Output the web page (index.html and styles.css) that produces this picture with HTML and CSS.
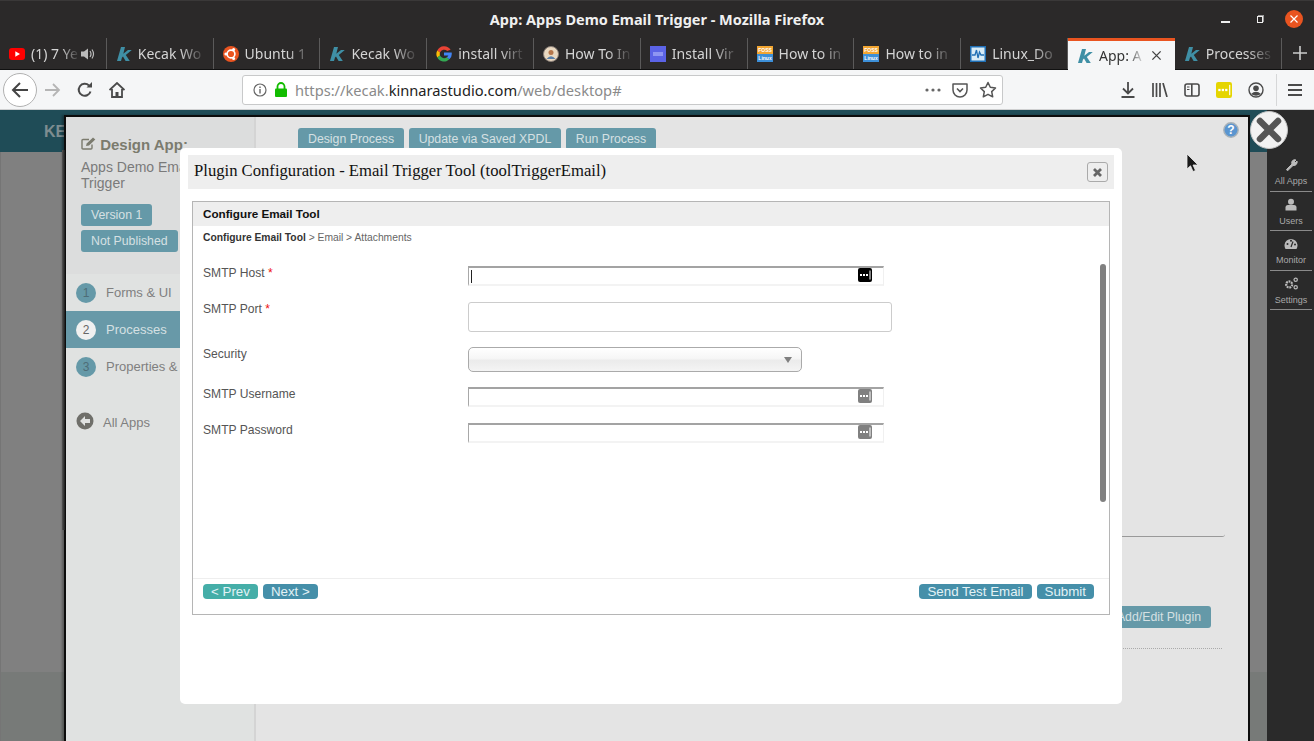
FILE: index.html
```html
<!DOCTYPE html>
<html lang="en">
<head>
    <meta charset="UTF-8">
    <meta name="viewport" content="width=device-width, initial-scale=1.0">
    <title>App: Apps Demo Email Trigger - Mozilla Firefox</title>
    <link rel="stylesheet" href="styles.css">
</head>
<body>
    <svg class="defs" width="0" height="0">
        <symbol id="k-logo" viewBox="0 0 16 16">
            <path d="M5 1H9L7.300 7.800 12 4H15.800L9.800 9 13.800 15H9.600L7 10.600 6 11.500 5 15H1z" fill="#3f8fa5"/>
        </symbol>
        <symbol id="pw-dots" viewBox="0 0 14 14">
            <rect width="14" height="14" rx="2" fill="currentColor"/>
            <rect x="2" y="6" width="2" height="2" fill="#fff"/>
            <rect x="5" y="6" width="2" height="2" fill="#fff"/>
            <rect x="8" y="6" width="2" height="2" fill="#fff"/>
            <rect x="11.500" y="2.500" width="1" height="9" fill="#fff"/>
        </symbol>
    </svg>

    <header class="titlebar">
        <span class="window-title">App: Apps Demo Email Trigger - Mozilla Firefox</span>
        <div class="window-controls">
            <span class="win-min"></span>
            <span class="win-max"></span>
            <span class="win-close">
                <svg width="10" height="10" viewBox="0 0 10 10"><path d="M1.500 1.500 8.500 8.500M8.500 1.500 1.500 8.500" stroke="#fff" stroke-width="1.200"/></svg>
            </span>
        </div>
    </header>

    <nav class="tabstrip">
        <div class="tab">
            <svg class="tab-icon" viewBox="0 0 16 16"><rect y="2" width="16" height="12" rx="3" fill="#f00"/><path d="M6.300 5.200 11 8 6.300 10.800z" fill="#fff"/></svg>
            <span class="tab-label tab-label-short">(1) 7 Ye</span>
            <svg class="tab-sound" viewBox="0 0 14 14"><path d="M0 4.500H3L7 1.500V12.500L3 9.500H0z" fill="#bbb"/><path d="M9 4Q11 7 9 10M11 2.500Q14 7 11 11.500" fill="none" stroke="#bbb" stroke-width="1.200"/></svg>
        </div>
        <div class="tab">
            <svg class="tab-icon"><use href="#k-logo"/></svg>
            <span class="tab-label">Kecak Wo</span>
        </div>
        <div class="tab">
            <svg class="tab-icon" viewBox="0 0 16 16"><circle cx="8" cy="8" r="8" fill="#e95420"/><circle cx="8" cy="8" r="3.900" fill="none" stroke="#fff" stroke-width="1.600"/><circle cx="2.900" cy="8" r="1.500" fill="#fff"/><circle cx="10.600" cy="3.500" r="1.500" fill="#fff"/><circle cx="10.600" cy="12.500" r="1.500" fill="#fff"/></svg>
            <span class="tab-label">Ubuntu 1</span>
        </div>
        <div class="tab">
            <svg class="tab-icon"><use href="#k-logo"/></svg>
            <span class="tab-label">Kecak Wo</span>
        </div>
        <div class="tab">
            <svg class="tab-icon" viewBox="0 0 16 16">
                <path d="M14.600 3.800A7.600 7.600 0 0 0 1.300 4.400L4 6.500A4.500 4.500 0 0 1 11.200 4.900z" fill="#ea4335"/>
                <path d="M1.300 4.400A7.600 7.600 0 0 0 1.300 11.600L4 9.500A4.500 4.500 0 0 1 4 6.500z" fill="#fbbc05"/>
                <path d="M1.300 11.600A7.600 7.600 0 0 0 13.400 13.300L10.800 11.300A4.500 4.500 0 0 1 4 9.500z" fill="#34a853"/>
                <path d="M13.400 13.300A7.600 7.600 0 0 0 15.700 6.600H8V9.600H12.400A4 4 0 0 1 10.800 11.300z" fill="#4285f4"/>
            </svg>
            <span class="tab-label">install virt</span>
        </div>
        <div class="tab">
            <svg class="tab-icon" viewBox="0 0 16 16"><circle cx="8" cy="8" r="7.500" fill="#e9d8c0" stroke="#8a7f78"/><circle cx="8" cy="6.500" r="2.500" fill="#b5764a"/><path d="M3.500 13Q8 7.500 12.500 13" fill="#5a7fa8"/></svg>
            <span class="tab-label">How To In</span>
        </div>
        <div class="tab">
            <svg class="tab-icon" viewBox="0 0 16 16"><rect width="16" height="16" fill="#5b63e6"/><rect x="3" y="6" width="10" height="4" fill="#8f96f2"/></svg>
            <span class="tab-label">Install Vir</span>
        </div>
        <div class="tab">
            <svg class="tab-icon" viewBox="0 0 16 16">
                <rect width="16" height="8" fill="#f2a531"/><rect y="8" width="16" height="8" fill="#3d8fd8"/>
                <text x="8" y="6" text-anchor="middle" class="foss-mark">FOSS</text>
                <text x="8" y="14" text-anchor="middle" class="foss-mark">Linux</text>
            </svg>
            <span class="tab-label">How to in</span>
        </div>
        <div class="tab">
            <svg class="tab-icon" viewBox="0 0 16 16">
                <rect width="16" height="8" fill="#f2a531"/><rect y="8" width="16" height="8" fill="#3d8fd8"/>
                <text x="8" y="6" text-anchor="middle" class="foss-mark">FOSS</text>
                <text x="8" y="14" text-anchor="middle" class="foss-mark">Linux</text>
            </svg>
            <span class="tab-label">How to in</span>
        </div>
        <div class="tab">
            <svg class="tab-icon" viewBox="0 0 16 16"><rect width="16" height="16" fill="#1f6fb5"/><rect x="1.500" y="1.500" width="13" height="13" fill="#d8ecf7"/><path d="M2 9H5L6.500 4 8 12 9.500 6 11 9H14" fill="none" stroke="#1f6fb5" stroke-width="1.300"/></svg>
            <span class="tab-label">Linux_Do</span>
        </div>
        <div class="tab tab-active">
            <svg class="tab-icon"><use href="#k-logo"/></svg>
            <span class="tab-label tab-label-active">App: A</span>
            <svg class="tab-x" viewBox="0 0 12 12"><path d="M1.500 1.500 10.500 10.500M10.500 1.500 1.500 10.500" stroke="#444" stroke-width="1.500"/></svg>
        </div>
        <div class="tab">
            <svg class="tab-icon"><use href="#k-logo"/></svg>
            <span class="tab-label">Processes</span>
        </div>
        <svg class="tab-new" viewBox="0 0 14 14"><path d="M7 0V14M0 7H14" stroke="#ccc" stroke-width="1.600"/></svg>
    </nav>

    <nav class="navbar">
        <span class="nav-back">
            <svg width="18" height="18" viewBox="0 0 18 18"><path d="M17 9H2M9 2 2 9 9 16" fill="none" stroke="#444" stroke-width="2"/></svg>
        </span>
        <span class="nav-btn">
            <svg width="16" height="16" viewBox="0 0 16 16"><path d="M0 8H14M8 2 14 8 8 14" fill="none" stroke="#b5b5b5" stroke-width="1.800"/></svg>
        </span>
        <span class="nav-btn">
            <svg width="16" height="16" viewBox="0 0 16 16"><path d="M13.500 9.500A6 6 0 1 1 12 3.500" fill="none" stroke="#4a4a4a" stroke-width="2"/><path d="M9.500 5.500H15V0z" fill="#4a4a4a"/></svg>
        </span>
        <span class="nav-btn">
            <svg width="16" height="16" viewBox="0 0 16 16"><path d="M.5 8 8 1 15.500 8M3 7V15H13V7" fill="none" stroke="#4a4a4a" stroke-width="1.800"/><rect x="6.500" y="10" width="3" height="5" fill="#4a4a4a"/></svg>
        </span>

        <div class="urlbar">
            <svg class="url-info" width="14" height="14" viewBox="0 0 14 14"><circle cx="7" cy="7" r="6" fill="none" stroke="#666" stroke-width="1.200"/><rect x="6.300" y="6" width="1.400" height="4.500" fill="#666"/><rect x="6.300" y="3.500" width="1.400" height="1.500" fill="#666"/></svg>
            <svg class="url-lock" width="12" height="15" viewBox="0 0 12 15"><path d="M2.500 7V4.500A3.500 3.500 0 0 1 9.500 4.500V7" fill="none" stroke="#12bc00" stroke-width="1.800"/><rect y="6.500" width="12" height="8.500" rx="1" fill="#12bc00"/></svg>
            <span class="url-text">https://kecak.<b>kinnarastudio.com</b>/web/desktop#</span>
            <span class="url-actions">
                <svg width="16" height="4" viewBox="0 0 16 4"><circle cx="2" cy="2" r="1.600" fill="#666"/><circle cx="8" cy="2" r="1.600" fill="#666"/><circle cx="14" cy="2" r="1.600" fill="#666"/></svg>
                <svg width="16" height="16" viewBox="0 0 16 16"><path d="M1 2H15V8A7 7 0 0 1 1 8z" fill="none" stroke="#555" stroke-width="1.500" stroke-linejoin="round"/><path d="M5 6.500 8 9.500 11 6.500" fill="none" stroke="#555" stroke-width="1.600"/></svg>
                <svg width="18" height="17" viewBox="0 0 18 17"><path d="M9 1.500 11.300 6.300 16.500 7 12.700 10.600 13.700 15.800 9 13.300 4.300 15.800 5.300 10.600 1.500 7 6.700 6.300z" fill="none" stroke="#555" stroke-width="1.500" stroke-linejoin="round"/></svg>
            </span>
        </div>

        <span class="nav-btn nav-btn-first">
            <svg width="16" height="16" viewBox="0 0 16 16"><path d="M8 0V11M3 6.500 8 11.500 13 6.500M1.500 15H14.500" fill="none" stroke="#4a4a4a" stroke-width="1.800"/></svg>
        </span>
        <span class="nav-btn">
            <svg width="16" height="14" viewBox="0 0 16 14"><path d="M1 0V14M4.500 0V14M8 0V14M11 0 15 14" fill="none" stroke="#4a4a4a" stroke-width="1.700"/></svg>
        </span>
        <span class="nav-btn">
            <svg width="16" height="14" viewBox="0 0 16 14"><rect x="1" y="1" width="14" height="12" rx="2" fill="none" stroke="#4a4a4a" stroke-width="1.600"/><rect x="7" y="1" width="1.600" height="12" fill="#4a4a4a"/><path d="M3 4H5.500M3 6.500H5.500" stroke="#4a4a4a"/></svg>
        </span>
        <span class="nav-btn">
            <svg class="ext-icon" width="16" height="16"><use href="#pw-dots"/></svg>
        </span>
        <span class="nav-btn">
            <svg width="16" height="16" viewBox="0 0 16 16"><circle cx="8" cy="8" r="7" fill="none" stroke="#4a4a4a" stroke-width="1.400"/><circle cx="8" cy="6.300" r="2.800" fill="#4a4a4a"/><path d="M3 12Q8 7.500 13 12Q8 15.500 3 12" fill="#4a4a4a"/></svg>
        </span>
        <span class="nav-sep"></span>
        <span class="nav-btn nav-btn-menu">
            <svg width="14" height="12" viewBox="0 0 14 12"><path d="M0 1H14M0 6H14M0 11H14" stroke="#4a4a4a" stroke-width="1.800"/></svg>
        </span>
    </nav>

    <main class="page">
        <div class="app-top"><span class="app-brand">KE</span></div>
        <div class="app-under">
            <div class="backdrop"></div>
            <aside class="side-menu">
                <a class="side-item">
                    <svg width="13" height="13" viewBox="0 0 13 13"><path d="M1.500 11.500 7 6A3 3 0 0 1 11 2L9 4 10 5 12 3A3.500 3.500 0 0 1 8 7.500L2.500 12.800z" fill="#bbb" stroke="#bbb"/></svg>
                    <span>All Apps</span>
                </a>
                <a class="side-item">
                    <svg width="12" height="12" viewBox="0 0 12 12"><circle cx="6" cy="3.200" r="3" fill="#bbb"/><path d="M.500 12V9Q.500 6.500 3 6.500H9Q11.500 6.500 11.500 9V12z" fill="#bbb"/></svg>
                    <span>Users</span>
                </a>
                <a class="side-item">
                    <svg width="14" height="11" viewBox="0 0 14 11"><path d="M1.500 11A6.500 6.500 0 1 1 12.500 11z" fill="#bbb"/><path d="M7 9 9 3.500" stroke="#2a2a2a" stroke-width="1.200"/><circle cx="3.500" cy="6" r="1" fill="#2a2a2a"/><circle cx="7" cy="2.800" r="1" fill="#2a2a2a"/><circle cx="11" cy="6.500" r="1" fill="#2a2a2a"/></svg>
                    <span>Monitor</span>
                </a>
                <a class="side-item">
                    <svg width="15" height="14" viewBox="0 0 15 14"><circle cx="5" cy="8" r="3.200" fill="none" stroke="#bbb" stroke-width="2.400" stroke-dasharray="2 .8"/><circle cx="12" cy="3" r="1.800" fill="none" stroke="#bbb" stroke-width="1.300"/><circle cx="12" cy="11" r="1.800" fill="none" stroke="#bbb" stroke-width="1.300"/></svg>
                    <span>Settings</span>
                </a>
            </aside>
        </div>

        <section class="designer">
            <aside class="designer-side">
                <div class="designer-head">
                    <h2 class="designer-title">
                        <svg width="15" height="13" viewBox="0 0 15 13"><path d="M11 7.500V11Q11 12 10 12H2Q1 12 1 11V3.500Q1 2.500 2 2.500H8" fill="none" stroke="#7b7b6e" stroke-width="1.400"/><path d="M5 9 5.700 6.500 12 .5 14.300 2.500 8 8.500z" fill="#7b7b6e"/></svg>
                        Design App:
                    </h2>
                    <p class="designer-app">Apps Demo Email<br>Trigger</p>
                    <span class="pill">Version 1</span>
                    <span class="pill">Not Published</span>
                </div>
                <ul class="steps">
                    <li class="step"><span class="step-num">1</span>Forms &amp; UI</li>
                    <li class="step step-active"><span class="step-num">2</span>Processes</li>
                    <li class="step"><span class="step-num">3</span>Properties &amp;</li>
                </ul>
                <a class="all-apps">
                    <svg width="18" height="18" viewBox="0 0 18 18"><circle cx="9" cy="9" r="8.500" fill="#6f6f6a"/><path d="M9 4 4 9 9 14V11H14V7H9z" fill="#e0e2e1"/></svg>
                    All Apps
                </a>
            </aside>
            <div class="designer-main">
                <div class="designer-tools">
                    <span class="pill pill-tool">Design Process</span>
                    <span class="pill pill-tool">Update via Saved XPDL</span>
                    <span class="pill pill-tool">Run Process</span>
                </div>
                <div class="process-box"></div>
                <div class="plugin-row"><span class="pill pill-tool">Add/Edit Plugin</span></div>
                <div class="dotted-line"></div>
            </div>
            <svg class="help-icon" width="18" height="18" viewBox="0 0 18 18"><circle cx="9" cy="9" r="7.200" fill="#5a95d0" stroke="#a9b2b8" stroke-width="1.400"/><text x="9" y="13" text-anchor="middle" class="help-mark">?</text></svg>
        </section>

        <span class="big-close">
            <svg width="26" height="26" viewBox="0 0 26 26"><path d="M4 4 22 22M22 4 4 22" stroke="#555" stroke-width="6.500" stroke-linecap="round"/></svg>
        </span>

        <section class="plugin-modal">
            <div class="modal-head">
                <span class="modal-title">Plugin Configuration - Email Trigger Tool (toolTriggerEmail)</span>
                <span class="modal-close">
                    <svg width="9" height="9" viewBox="0 0 9 9"><path d="M1 1 8 8M8 1 1 8" stroke="#666" stroke-width="2.800"/></svg>
                </span>
            </div>
            <div class="config-frame">
                <div class="config-head">Configure Email Tool</div>
                <div class="crumbs"><b>Configure Email Tool</b> &gt; Email &gt; Attachments</div>
                <div class="config-body">
                    <form class="config-form">
                        <div class="field field-h20">
                            <label>SMTP Host <em>*</em></label>
                            <div class="pw-input">
                                <span class="caret-line"></span>
                                <svg class="pw-icon pw-icon-on" width="14" height="14"><use href="#pw-dots"/></svg>
                            </div>
                        </div>
                        <div class="field field-h30">
                            <label>SMTP Port <em>*</em></label>
                            <div class="text-input"></div>
                        </div>
                        <div class="field field-h25">
                            <label>Security</label>
                            <div class="select-box"><span class="select-arrow"></span></div>
                        </div>
                        <div class="field field-h20">
                            <label>SMTP Username</label>
                            <div class="pw-input">
                                <svg class="pw-icon" width="14" height="14"><use href="#pw-dots"/></svg>
                            </div>
                        </div>
                        <div class="field field-h20">
                            <label>SMTP Password</label>
                            <div class="pw-input">
                                <svg class="pw-icon" width="14" height="14"><use href="#pw-dots"/></svg>
                            </div>
                        </div>
                    </form>
                    <div class="scroll-thumb"></div>
                </div>
                <div class="config-foot">
                    <span class="btn btn-prev">&lt; Prev</span>
                    <span class="btn">Next &gt;</span>
                    <span class="btn btn-right">Send Test Email</span>
                    <span class="btn">Submit</span>
                </div>
            </div>
        </section>

        <svg class="mouse" width="13" height="20" viewBox="0 0 13 20"><path d="M1 1V16L4.500 12.800 7 18.500 9.500 17.500 7 12H12z" fill="#1a1a1a" stroke="#eee" stroke-width=".8"/></svg>
    </main>
</body>
</html>
```

FILE: styles.css
```css
/* General Reset */
* {
    margin: 0;
    padding: 0;
    box-sizing: border-box;
}

body {
    width: 1314px;
    height: 741px;
    overflow: hidden;
    display: flex;
    flex-direction: column;
    font-family: 'Liberation Sans', Arial, sans-serif;
    background: #808080;
}

.defs {
    position: absolute;
}

.foss-mark {
    font-family: 'Liberation Sans', Arial, sans-serif;
    font-size: 5px;
    font-weight: 700;
    fill: #fff;
}

/* Window title bar */
.titlebar {
    height: 38px;
    padding-bottom: 2px;
    display: flex;
    align-items: center;
    justify-content: center;
    background: #2b2929;
    border-top: 1px solid #3a3838;
    position: relative;
}

.window-title {
    font-family: 'Noto Sans', sans-serif;
    font-size: 14.5px;
    font-weight: 700;
    color: #f0f0f0;
}

.window-controls {
    position: absolute;
    right: 11px;
    top: 9px;
    display: flex;
    align-items: center;
}

.win-min {
    width: 9px;
    height: 2px;
    margin-top: 5px;
    background: #eee;
}

.win-max {
    width: 6px;
    height: 7px;
    margin-left: 27px;
    border: 1px solid #eee;
    box-shadow: 1px -1px 0 #999;
}

.win-close {
    width: 18px;
    height: 18px;
    margin-left: 22px;
    border-radius: 50%;
    background: #e95420;
    display: flex;
    align-items: center;
    justify-content: center;
}

/* Tabs */
.tabstrip {
    height: 32px;
    display: flex;
    background: #2b2929;
    border-bottom: 1px solid #111;
}

.tab {
    width: 106.8px;
    height: 31px;
    padding-left: 9px;
    display: flex;
    align-items: center;
    border-right: 1px solid #5b5a5a;
    overflow: hidden;
}

.tab-icon {
    width: 16px;
    height: 16px;
    flex: none;
}

.tab-label {
    margin-left: 6px;
    width: 68px;
    flex: none;
    white-space: nowrap;
    font-family: 'Noto Sans', sans-serif;
    font-size: 14px;
    color: #d4d4d4;
    -webkit-mask-image: linear-gradient(to right, #000 62%, transparent);
    mask-image: linear-gradient(to right, #000 62%, transparent);
}

.tab-label-short {
    width: 49px;
}

.tab-label-active {
    width: 46px;
    color: #333;
}

.tab-sound {
    width: 14px;
    height: 14px;
    flex: none;
    margin-left: 1px;
}

.tab-active {
    height: 32px;
    background: #f5f6f7;
    border-top: 3px solid #e95420;
    border-right: none;
}

.tab-x {
    width: 11px;
    height: 11px;
    flex: none;
    margin-left: 6px;
}

.tab-new {
    width: 14px;
    height: 14px;
    margin: 8px 0 0 11px;
}

/* Nav bar */
.navbar {
    height: 40px;
    padding-left: 3px;
    display: flex;
    align-items: center;
    background: #f5f6f7;
    border-bottom: 1px solid #cfd0d1;
}

.nav-back {
    width: 34px;
    height: 34px;
    border-radius: 50%;
    border: 1px solid #b1b1b1;
    background: #fff;
    display: flex;
    align-items: center;
    justify-content: center;
}

.nav-btn {
    width: 32px;
    height: 32px;
    flex: none;
    display: flex;
    align-items: center;
    justify-content: center;
}

.nav-btn-first {
    margin-left: 109px;
}

.nav-btn-menu {
    margin-left: 2px;
}

.ext-icon {
    color: #e5d500;
}

.nav-sep {
    width: 1px;
    height: 32px;
    margin-left: 4px;
    background: #d6d7d8;
}

.urlbar {
    width: 761px;
    height: 30px;
    margin-left: 109px;
    padding: 0 5px 0 10px;
    flex: none;
    display: flex;
    align-items: center;
    background: #fff;
    border: 1px solid #c8c9ca;
    border-radius: 3px;
}

.url-lock {
    margin-left: 8px;
}

.url-text {
    margin-left: 8px;
    padding-top: 1px;
    font-family: 'Noto Sans', sans-serif;
    font-size: 14.67px;
    color: #8a8a8a;
}

.url-text b {
    font-weight: 400;
    color: #222;
}

.url-actions {
    margin-left: auto;
    display: flex;
    align-items: center;
    gap: 11px;
}

/* Page behind the dialogs */
.page {
    flex: 1;
    position: relative;
    overflow: hidden;
}

.app-top {
    height: 42px;
    background: #1f4c57;
}

.app-brand {
    display: block;
    padding: 13px 0 0 44px;
    font-size: 16px;
    font-weight: 700;
    color: #7d8d90;
}

.app-under {
    height: 589px;
    display: flex;
}

.backdrop {
    flex: 1;
    background: linear-gradient(#808080 520px, #777a78 520px);
    border-left: 1px solid #757575;
}

.side-menu {
    width: 47px;
    margin-top: -42px;
    padding: 42px 2px 0 3px;
    background: #2a2a2a;
}

.side-item {
    height: 39.5px;
    padding-top: 6px;
    display: flex;
    flex-direction: column;
    align-items: center;
    gap: 5px;
    border-bottom: 1px solid #8a8a8a;
    font-size: 9px;
    color: #a9a9a9;
}

.side-item svg {
    height: 13px;
    flex: none;
}

/* App designer dialog */
.designer {
    position: absolute;
    left: 64px;
    top: 5px;
    width: 1186px;
    height: 640px;
    display: flex;
    background: #e4e4e4;
    border: 2px solid #0c0c0c;
    border-bottom: none;
    box-shadow: -2px 0 2px rgba(0, 0, 0, 0.3);
}

.designer::before {
    content: "";
    position: absolute;
    left: -4px;
    top: 33px;
    width: 3px;
    height: 380px;
    background: linear-gradient(to right, #555, #1c1c1c);
}

.designer-side {
    width: 190px;
    flex: none;
    background: #e0e2e1;
    border-right: 2px solid #d4d4d4;
}

.designer-head {
    height: 157px;
    padding: 19px 0 0 15px;
    background: #dcdddd;
}

.designer-title {
    font-size: 15px;
    font-weight: 700;
    line-height: 18px;
    color: #7b7b6e;
}

.designer-app {
    margin: 5px 0 13px;
    font-size: 14px;
    line-height: 16px;
    color: #7a7a7a;
    white-space: nowrap;
}

.pill {
    display: table;
    padding: 0 10px;
    height: 22px;
    line-height: 22px;
    margin-bottom: 4px;
    font-size: 12.3px;
    color: #d5e0e3;
    background: #6599a8;
    border-radius: 3px;
}

.steps {
    list-style: none;
}

.step {
    height: 37px;
    display: flex;
    align-items: center;
    padding-left: 10px;
    font-size: 13px;
    color: #7f7f7f;
    white-space: nowrap;
}

.step-active {
    background: #6899a8;
    color: #d5e0e3;
}

.step-num {
    width: 20px;
    height: 20px;
    margin-right: 10px;
    border-radius: 50%;
    background: #6599a8;
    color: #4e6d77;
    font-size: 12px;
    line-height: 20px;
    text-align: center;
}

.step-active .step-num {
    background: #f0f0f0;
    color: #666;
}

.all-apps {
    margin: 30px 0 0 10px;
    display: flex;
    align-items: center;
    gap: 9px;
    font-size: 13px;
    color: #7f7f7f;
}

.all-apps svg {
    margin-top: -4px;
}

.designer-main {
    flex: 1;
    padding: 11px 23px 0 42px;
}

.designer-tools {
    display: flex;
    gap: 4.5px;
}

.pill-tool {
    display: block;
    margin: 0;
}

.process-box {
    height: 387px;
    border-bottom: 1px solid #999;
    border-bottom-right-radius: 3px;
}

.plugin-row {
    margin-top: 69px;
    padding-right: 14px;
    display: flex;
    justify-content: flex-end;
}

.dotted-line {
    margin: 20px 3px 0 0;
    border-bottom: 1px dotted #aaa;
}

.help-icon {
    position: absolute;
    right: 8px;
    top: 4px;
}

.help-mark {
    font-family: 'Liberation Sans', Arial, sans-serif;
    font-size: 12px;
    font-weight: 700;
    fill: #fff;
}

.big-close {
    position: absolute;
    left: 1250px;
    top: 1px;
    width: 38px;
    height: 38px;
    border-radius: 50%;
    background: #f2f2f2;
    border: 1px solid #c4c4c4;
    display: flex;
    align-items: center;
    justify-content: center;
}

.mouse {
    position: absolute;
    left: 1186px;
    top: 43px;
}

/* Plugin configuration popup */
.plugin-modal {
    position: absolute;
    left: 180px;
    top: 38px;
    width: 942px;
    height: 556px;
    padding: 7px 8px;
    background: #fff;
    border-radius: 5px;
}

.modal-head {
    height: 34px;
    padding: 0 6px 2px;
    display: flex;
    align-items: center;
    justify-content: space-between;
    background: #eee;
}

.modal-title {
    font-family: 'Liberation Serif', 'Times New Roman', serif;
    font-size: 16.65px;
    color: #111;
}

.modal-close {
    width: 21px;
    height: 20px;
    margin-top: 2px;
    display: flex;
    align-items: center;
    justify-content: center;
    border: 1px solid #aaa;
    border-radius: 3px;
}

.config-frame {
    width: 918px;
    height: 414px;
    margin: 12px 0 0 4px;
    display: flex;
    flex-direction: column;
    border: 1px solid #b5b5b5;
}

.config-head {
    height: 24px;
    flex: none;
    padding-left: 10px;
    line-height: 24px;
    font-size: 11.7px;
    font-weight: 700;
    color: #111;
    background: #eee;
}

.crumbs {
    height: 22px;
    flex: none;
    padding-left: 10px;
    line-height: 23px;
    font-size: 10.3px;
    color: #666;
}

.crumbs b {
    color: #333;
}

.config-body {
    flex: 1;
    padding: 18px 0 0 10px;
    position: relative;
}

.field {
    display: grid;
    grid-template-columns: 265px 1fr;
    font-size: 12.1px;
    color: #555;
}

.field-h20 {
    height: 20px;
    margin-bottom: 16px;
}

.field-h30 {
    height: 30px;
    margin-bottom: 15px;
}

.field-h25 {
    height: 25px;
    margin-bottom: 15px;
}

.field label {
    line-height: 14px;
}

.field em {
    color: #e11;
    font-style: normal;
}

.pw-input {
    width: 416px;
    height: 20px;
    position: relative;
    background: #fff;
    border-top: 2px solid #a3a3a3;
    border-left: 1px solid #a8a8a8;
    border-right: 1px solid #f0f0f0;
    border-bottom: 2px solid #f3f3f3;
}

.caret-line {
    position: absolute;
    left: 2px;
    top: 2px;
    width: 1px;
    height: 13px;
    background: #222;
}

.pw-icon {
    position: absolute;
    right: 11px;
    top: 0;
    color: #808080;
}

.pw-icon-on {
    color: #000;
}

.text-input {
    width: 424px;
    height: 30px;
    border: 1px solid #ccc;
    border-radius: 3px;
}

.select-box {
    width: 334px;
    height: 25px;
    position: relative;
    border: 1px solid #aaa;
    border-radius: 5px;
    background: linear-gradient(#fff, #f6f6f6 45%, #ebebeb 55%, #f4f4f4);
}

.select-arrow {
    position: absolute;
    right: 9px;
    top: 9px;
    border-left: 4px solid transparent;
    border-right: 4px solid transparent;
    border-top: 6px solid #808080;
}

.scroll-thumb {
    position: absolute;
    right: 3px;
    top: 16px;
    width: 6px;
    height: 238px;
    border-radius: 3px;
    background: #808080;
}

.config-foot {
    height: 36px;
    flex: none;
    padding: 5px 15px 0 10px;
    display: flex;
    align-items: flex-start;
    gap: 5px;
    border-top: 1px solid #eee;
}

.btn {
    height: 15px;
    padding: 0 8px;
    line-height: 15px;
    font-size: 13.33px;
    color: #e2f2f6;
    background: #458fa9;
    border-radius: 4px;
    white-space: nowrap;
}

.btn-prev {
    background: #45aea8;
}

.btn-right {
    margin-left: auto;
}
```
